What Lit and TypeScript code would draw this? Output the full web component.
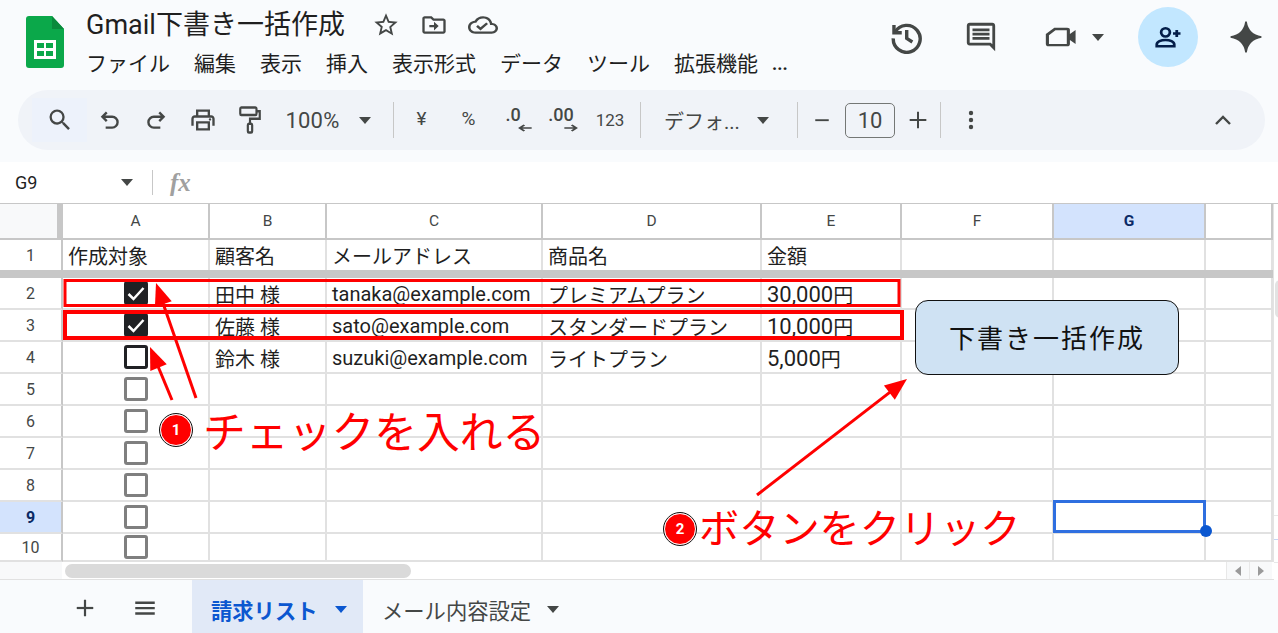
import { LitElement, css, html, svg } from "lit";
import { customElement } from "lit/decorators.js";
import { classMap } from "lit/directives/class-map.js";

const COLS = ["A", "B", "C", "D", "E", "F", "G", ""];
const MENUS = ["ファイル", "編集", "表示", "挿入", "表示形式", "データ", "ツール", "拡張機能"];

const ROWS: string[][] = [
  ["作成対象", "顧客名", "メールアドレス", "商品名", "金額"],
  ["", "田中 様", "tanaka@example.com", "プレミアムプラン", "30,000"],
  ["", "佐藤 様", "sato@example.com", "スタンダードプラン", "10,000"],
  ["", "鈴木 様", "suzuki@example.com", "ライトプラン", "5,000"],
];

const icon = (w: number, h: number, body: unknown, vb = "0 0 24 24") =>
  html`<svg width=${w} height=${h} viewBox=${vb} fill="#444746" preserveAspectRatio="none">${body}</svg>`;

const caret = (color = "#444746") =>
  html`<svg width="12" height="7" viewBox="0 0 12 7"><path d="M0 0h12L6 7z" fill=${color}></path></svg>`;

@customElement("app-root")
export class AppRoot extends LitElement {
  static styles = css`
    :host {
      display: block;
      position: relative;
      width: 1278px;
      height: 633px;
      overflow: hidden;
      background: #fff;
      font-family: Roboto, "Noto Sans CJK JP", sans-serif;
      color: #1f1f1f;
    }
    svg {
      display: block;
      flex: none;
    }

    header {
      height: 162px;
      box-sizing: border-box;
      background: #f9fbfd;
      padding: 7px 16px 0 26px;
    }
    .top {
      display: flex;
      height: 83px;
    }
    .logo {
      margin-top: 9px;
      margin-right: 22px;
    }
    .docinfo {
      width: 780px;
    }
    .title-row {
      display: flex;
      align-items: center;
      height: 36px;
    }
    .title {
      font-size: 27px;
      line-height: 36px;
      width: 286px;
      white-space: nowrap;
    }
    .title-icons {
      display: flex;
      align-items: center;
      gap: 20px;
      margin-left: 20px;
    }
    .menu {
      display: flex;
      gap: 24px;
      margin-top: 4px;
      font-size: 21px;
      line-height: 34px;
      white-space: nowrap;
    }
    .more {
      margin-left: -10px;
      font-size: 18px;
      font-weight: 700;
    }
    .actions {
      display: flex;
      align-items: center;
      height: 60px;
      margin-left: auto;
    }
    .gap-history {
      width: 41px;
    }
    .video {
      display: flex;
      align-items: center;
      gap: 15px;
      margin: 0 34px 0 45px;
    }
    .share {
      width: 60px;
      height: 60px;
      border-radius: 50%;
      background: #c2e7ff;
      display: flex;
      align-items: center;
      justify-content: center;
      margin-right: 32px;
    }

    .toolbar {
      display: flex;
      align-items: center;
      height: 60px;
      margin-left: -8px;
      margin-right: -3px;
      padding-left: 14px;
      border-radius: 30px;
      background: #f0f3f8;
      color: #444746;
    }
    .tool {
      display: flex;
      align-items: center;
      justify-content: center;
      flex: none;
      height: 44px;
    }
    .search {
      width: 55px;
      background: #edf2fb;
    }
    .sep {
      flex: none;
      width: 1px;
      height: 36px;
      background: #c7c7c7;
    }
    .zoom-text {
      font-size: 22px;
      letter-spacing: 0.2px;
    }
    .small {
      font-size: 17px;
    }
    .sym {
      font-size: 19px;
      padding-bottom: 4px;
    }
    .dec {
      flex-direction: column;
      font-size: 18px;
      font-weight: 500;
      line-height: 14px;
      gap: 1px;
    }
    .dec svg {
      align-self: flex-end;
      margin-right: 5px;
    }
    .font-name {
      font-size: 20px;
      white-space: nowrap;
    }
    .size-box {
      width: 48px;
      height: 33px;
      border: 1px solid #747775;
      border-radius: 5px;
      display: flex;
      align-items: center;
      justify-content: center;
      font-size: 22px;
      color: #444746;
    }
    .collapse {
      margin-left: auto;
      margin-right: 33px;
    }

    .formula {
      display: flex;
      align-items: center;
      height: 41px;
      padding-left: 15px;
      border-bottom: 1px solid #c7c7c7;
      font-size: 18px;
    }
    .name {
      width: 106px;
    }
    .formula .sep {
      height: 25px;
      margin: 0 17px 0 19px;
    }
    .fx {
      font-family: "Liberation Serif", serif;
      font-style: italic;
      font-weight: 700;
      font-size: 25px;
      color: #a0a0a0;
    }

    .sheet {
      display: flex;
      height: 376px;
    }
    .grid {
      display: grid;
      grid-template-columns: 63px 147px 117px 216px 219px 140px 152px 152px 67px;
      grid-template-rows: 36px 30px 8px repeat(7, 32px) 32px 28px;
      width: 1273px;
      height: 358px;
      border-right: 1px solid #e3e3e3;
    }
    .cell {
      position: relative;
      box-sizing: border-box;
      border-right: 2px solid #e1e1e1;
      border-bottom: 2px solid #e1e1e1;
      display: flex;
      align-items: center;
      padding-left: 5px;
      font-size: 20px;
      white-space: nowrap;
      min-width: 0;
    }
    .lift {
      padding-top: 2px;
    }
    .digits {
      font-size: 22px;
    }
    .head {
      justify-content: center;
      padding: 0;
      font-size: 15.5px;
      color: #444746;
      border-color: #c7c7c7;
    }
    .corner {
      background: #f8f9fa;
      border-right: 6px solid #c7c7c7;
    }
    .row-head {
      justify-content: center;
      padding: 0;
      font-size: 16px;
      color: #444746;
      border-right-color: #c7c7c7;
    }
    .active-head {
      background: #d3e3fd;
      color: #0b2a66;
      font-weight: 700;
    }
    .no-line {
      border-bottom: 0;
    }
    .freeze {
      grid-column: 1 / -1;
      background: #c7c7c7;
    }
    .center {
      justify-content: center;
      padding: 0;
    }
    .box {
      width: 24px;
      height: 24px;
      box-sizing: border-box;
      border: 3px solid #7f7f7f;
      border-radius: 3px;
      display: flex;
      align-items: center;
      justify-content: center;
    }
    .box.dark {
      border-color: #202124;
    }
    .box.on {
      background: #202124;
      border-color: #202124;
    }
    .selected::after {
      content: "";
      position: absolute;
      left: -1px;
      top: -2px;
      right: -2px;
      bottom: -1px;
      border: 3px solid #2f6fe0;
    }
    .selected::before {
      content: "";
      position: absolute;
      right: -8px;
      bottom: -5px;
      width: 12px;
      height: 12px;
      border-radius: 50%;
      background: #0b57d0;
      z-index: 1;
    }
    .vscroll {
      flex: 1;
      position: relative;
    }
    .vthumb {
      position: absolute;
      left: 1px;
      top: 76px;
      width: 10px;
      height: 38px;
      border-radius: 5px;
      background: #e3e3e3;
    }
    .varrows {
      position: absolute;
      left: 0;
      top: 311px;
      width: 100%;
      height: 46px;
      border-top: 1px solid #e8e8e8;
      border-bottom: 1px solid #e8e8e8;
    }
    .varrows::after {
      content: "";
      position: absolute;
      left: 0;
      right: 0;
      top: 23px;
      height: 1px;
      background: #c6d6f5;
    }
    .hscroll {
      display: flex;
      align-items: center;
      height: 18px;
      box-sizing: border-box;
      border-bottom: 1px solid #e1e1e1;
    }
    .hcorner {
      flex: none;
      width: 62px;
      height: 100%;
      background: #f8f9fa;
      margin-right: 3px;
    }
    .hthumb {
      flex: none;
      width: 346px;
      height: 14px;
      border-radius: 7px;
      background: #dadada;
    }
    .harrows {
      display: flex;
      margin-left: auto;
      margin-right: 2px;
      height: 100%;
      background: #f8f9fa;
    }
    .harrows span {
      width: 23px;
      box-sizing: border-box;
      border-left: 1px solid #e8e8e8;
      display: flex;
      align-items: center;
      justify-content: center;
    }

    .tabs {
      display: flex;
      align-items: stretch;
      height: 53px;
      background: #f9fbfd;
      padding-left: 74px;
    }
    .tab-tool {
      display: flex;
      align-items: center;
      height: 56px;
    }
    .tab {
      display: flex;
      align-items: center;
      padding-top: 6px;
      box-sizing: border-box;
      font-size: 21.3px;
      color: #444746;
      white-space: nowrap;
    }
    .tab.active {
      width: 171px;
      padding-left: 19px;
      margin-left: 34px;
      gap: 17px;
      background: #e1e9f7;
      color: #0b57d0;
      font-weight: 700;
    }
    .tab.other {
      padding-left: 19px;
      gap: 16px;
    }

    /* annotations drawn over the sheet */
    .marks {
      position: absolute;
      left: 0;
      top: 0;
      pointer-events: none;
    }
    .note {
      position: absolute;
      font-family: "Noto Sans CJK JP", sans-serif;
      color: #f00;
      white-space: nowrap;
      line-height: 1;
    }
    .note-1 {
      left: 203px;
      top: 408px;
      font-size: 42.8px;
    }
    .note-2 {
      left: 699px;
      top: 506px;
      font-size: 40.2px;
    }
    .badge {
      position: absolute;
      width: 30px;
      height: 30px;
      border-radius: 50%;
      background: #f00;
      border: 1px solid #fff;
      outline: 1px solid #111;
      display: flex;
      align-items: center;
      justify-content: center;
      color: #fff;
      font-size: 15px;
      font-weight: 700;
    }
    .badge-1 {
      left: 160px;
      top: 414px;
    }
    .badge-2 {
      left: 664px;
      top: 513px;
    }
    .draft {
      position: absolute;
      left: 915px;
      top: 300px;
      width: 264px;
      height: 75px;
      box-sizing: border-box;
      padding-bottom: 2px;
      border: 1.5px solid #111;
      border-radius: 13px;
      background: #cfe2f3;
      display: flex;
      align-items: center;
      justify-content: center;
      font-family: "Noto Sans CJK JP", sans-serif;
      font-size: 26px;
      letter-spacing: 2px;
      color: #111;
    }
  `;

  private renderHeader() {
    return html`
      <header>
        <div class="top">
          <div class="logo">
            <svg width="38" height="52" viewBox="0 0 38 52">
              <path d="M3 0h23l12 13v36a3 3 0 0 1-3 3H3a3 3 0 0 1-3-3V3a3 3 0 0 1 3-3z" fill="#0ba84a"></path>
              <path d="M26 0l12 13H26z" fill="#0a8a3c"></path>
              <path d="M8 24h22v19H8zM11 27v5h7v-5zM20 27v5h7v-5zM11 35v5h7v-5zM20 35v5h7v-5z" fill="#fff" fill-rule="evenodd"></path>
            </svg>
          </div>
          <div class="docinfo">
            <div class="title-row">
              <span class="title">Gmail下書き一括作成</span>
              ${icon(28, 28, svg`<path d="M22 9.24l-7.19-.62L12 2 9.19 8.63 2 9.24l5.46 4.73L5.82 21 12 17.27 18.18 21l-1.63-7.03L22 9.24zM12 15.4l-3.76 2.27 1-4.28-3.32-2.88 4.38-.38L12 6.1l1.71 4.04 4.38.38-3.32 2.88 1 4.28L12 15.4z"></path>`)}
              <div class="title-icons">
                ${icon(28, 26, svg`<path d="M20 6h-8l-2-2H4c-1.1 0-2 .9-2 2v12c0 1.1.9 2 2 2h16c1.1 0 2-.9 2-2V8c0-1.1-.9-2-2-2zm0 12H4V6h5.17l2 2H20v10zm-8-1l4-4-4-4v3H8v2h4v3z"></path>`)}
                ${icon(30, 26, svg`<path d="M19.35 10.04C18.67 6.59 15.64 4 12 4 9.11 4 6.6 5.64 5.35 8.04 2.34 8.36 0 10.91 0 14c0 3.31 2.69 6 6 6h13c2.76 0 5-2.24 5-5 0-2.64-2.05-4.78-4.65-4.96zM19 18H6c-2.21 0-4-1.79-4-4 0-2.05 1.53-3.76 3.56-3.97l1.07-.11.5-.95C8.08 7.14 9.94 6 12 6c2.62 0 4.88 1.86 5.39 4.43l.3 1.5 1.53.11c1.56.1 2.78 1.41 2.78 2.96 0 1.65-1.35 3-3 3zm-9-3.82l-2.09-2.09L6.5 13.5 10 17l6.01-6.01-1.41-1.41z"></path>`)}
              </div>
            </div>
            <div class="menu">
              ${MENUS.map((m) => html`<span>${m}</span>`)}
              <span class="more">...</span>
            </div>
          </div>
          <div class="actions">
            ${icon(34, 34, svg`<g fill="none" stroke="#444746" stroke-width="2.4"><path d="M4.3 8.5A9.5 9.5 0 1 1 3 13"></path><path d="M3.5 3.5V9H9"></path><path d="M12.5 7v6l4 2.5"></path></g>`)}
            <div class="gap-history"></div>
            ${icon(34, 34, svg`<path d="M21.99 4c0-1.1-.89-2-1.99-2H4c-1.1 0-2 .9-2 2v12c0 1.1.9 2 2 2h14l4 4-.01-18zM20 4v13.17L18.83 16H4V4h16zM6 12h12v2H6zm0-3h12v2H6zm0-3h12v2H6z"></path>`)}
            <div class="video">
              ${icon(34, 28, svg`<path d="M8 4h9a2 2 0 0 1 2 2v3.5L23 6v12l-4-3.5V18a2 2 0 0 1-2 2H4a2 2 0 0 1-2-2V9.5zM8.8 6.2L4.2 10.4V18h12.6V6.2z" fill-rule="evenodd"></path>`)}
              ${caret()}
            </div>
            <div class="share">
              ${icon(30, 28, svg`<g fill="none" stroke="#041e49" stroke-width="2.2"><circle cx="10" cy="8" r="3.5"></circle><path d="M3 20v-1.5c0-2.500 3.5-4 7-4s7 1.500 7 4V20z"></path><path d="M19 6v6M16 9h6"></path></g>`)}
            </div>
            ${icon(32, 32, svg`<path d="M12 .5C13 7 17 11 23.5 12 17 13 13 17 12 23.5 11 17 7 13 .5 12 7 11 11 7 12 .5z" stroke="#444746" stroke-width="1.2"></path>`)}
          </div>
        </div>
        <div class="toolbar">
          <div class="tool search">
            ${icon(28, 28, svg`<path d="M15.5 14h-.79l-.28-.27A6.471 6.471 0 0 0 16 9.5 6.5 6.5 0 1 0 9.5 16c1.61 0 3.09-.59 4.23-1.57l.27.28v.79l5 4.99L20.49 19l-4.99-5zm-6 0C7.01 14 5 11.99 5 9.5S7.01 5 9.5 5 14 7.01 14 9.5 11.99 14 9.5 14z"></path>`)}
          </div>
          <div class="tool" style="width:45px">
            ${icon(26, 26, svg`<path d="M9 5L5 9l4 4M5 9h9a5 5 0 0 1 0 10H8" fill="none" stroke="#444746" stroke-width="2.2"></path>`)}
          </div>
          <div class="tool" style="width:47px">
            ${icon(26, 26, svg`<path d="M15 5l4 4-4 4M19 9h-9a5 5 0 0 0 0 10h6" fill="none" stroke="#444746" stroke-width="2.2"></path>`)}
          </div>
          <div class="tool" style="width:48px">
            ${icon(28, 28, svg`<path d="M19 8h-1V3H6v5H5c-1.66 0-3 1.34-3 3v6h4v4h12v-4h4v-6c0-1.66-1.34-3-3-3zM8 5h8v3H8V5zm8 14H8v-4h8v4zm2-2v-4H6v4H4v-6c0-.55.45-1 1-1h14c.55 0 1 .45 1 1v6h-2z"></path><circle cx="18" cy="11.5" r="1"></circle>`)}
          </div>
          <div class="tool" style="width:46px">
            ${icon(26, 30, svg`<g fill="none" stroke="#444746" stroke-width="2"><rect x="3" y="2" width="15" height="6" rx="1"></rect><path d="M18 5h3v6h-9v4"></path><rect x="10" y="15" width="4" height="7" rx="1"></rect></g>`)}
          </div>
          <div class="tool zoom-text" style="width:79px">100%</div>
          <div class="tool" style="width:26px">${caret()}</div>
          <div style="width:15px"></div>
          <div class="sep"></div>
          <div class="tool sym" style="width:55px">¥</div>
          <div class="tool sym" style="width:39px">%</div>
          <div class="tool dec" style="width:50px">
            <span>.0</span>
            ${icon(16, 10, svg`<path d="M22 12H5M11 5l-7 7 7 7" fill="none" stroke="#444746" stroke-width="3.4"></path>`)}
          </div>
          <div class="tool dec" style="width:46px">
            <span>.00</span>
            ${icon(16, 10, svg`<path d="M2 12h17M13 5l7 7-7 7" fill="none" stroke="#444746" stroke-width="3.4"></path>`)}
          </div>
          <div class="tool small" style="width:52px">123</div>
          <div style="width:4px"></div>
          <div class="sep"></div>
          <div class="tool font-name" style="width:122px">デフォ...</div>
          <div class="tool" style="width:0">${caret()}</div>
          <div style="width:34px"></div>
          <div class="sep"></div>
          <div class="tool" style="width:47px">${icon(18, 18, svg`<path d="M3 11h18v2.5H3z"></path>`)}</div>
          <div class="size-box">10</div>
          <div class="tool" style="width:45px">${icon(20, 20, svg`<path d="M2 10.8h20v2.4H2z"></path><path d="M10.8 2h2.4v20h-2.4z"></path>`)}</div>
          <div class="sep"></div>
          <div class="tool" style="width:59px">${icon(6, 20, svg`<circle cx="3" cy="3" r="2.2"></circle><circle cx="3" cy="10" r="2.2"></circle><circle cx="3" cy="17" r="2.2"></circle>`, "0 0 6 20")}</div>
          <div class="tool collapse">${icon(18, 12, svg`<path d="M2 10l7-7 7 7" fill="none" stroke="#444746" stroke-width="2.4"></path>`, "0 0 18 12")}</div>
        </div>
      </header>
    `;
  }

  private renderFormula() {
    return html`
      <div class="formula">
        <span class="name">G9</span>
        ${caret()}
        <div class="sep"></div>
        <span class="fx">fx</span>
      </div>
    `;
  }

  private renderCheck(row: number) {
    const checked = row === 2 || row === 3;
    return html`
      <div class=${classMap({ box: true, on: checked, dark: row === 4 })}>
        ${checked
          ? html`<svg width="18" height="15" viewBox="0 0 18 15"><path d="M1.5 8l5 5L16.5 2" fill="none" stroke="#fff" stroke-width="2.5"></path></svg>`
          : ""}
      </div>
    `;
  }

  private renderRow(row: number) {
    const data = ROWS[row - 1] ?? [];
    const first = row === 1;
    return html`
      <div class=${classMap({ cell: true, "row-head": true, "active-head": row === 9, "no-line": first })}>${row}</div>
      ${COLS.map((_, i) => {
        const isCheck = i === 0 && row > 1;
        const isAmount = i === 4 && !first && data[i];
        return html`
          <div
            class=${classMap({
              cell: true,
              center: isCheck,
              lift: !isCheck && !first,
              "no-line": first,
              selected: row === 9 && i === 6,
            })}
          >
            ${isCheck
              ? this.renderCheck(row)
              : isAmount
                ? html`<span class="digits">${data[i]}</span>円`
                : data[i] ?? ""}
          </div>
        `;
      })}
    `;
  }

  private renderSheet() {
    const rows = [2, 3, 4, 5, 6, 7, 8, 9];
    return html`
      <div class="sheet">
        <div style="flex:none">
          <div class="grid">
            <div class="cell head corner"></div>
            ${COLS.map(
              (c) => html`<div class=${classMap({ cell: true, head: true, "active-head": c === "G" })}>${c}</div>`,
            )}
            ${this.renderRow(1)}
            <div class="freeze"></div>
            ${rows.map((r) => this.renderRow(r))}
            ${this.renderRow(10)}
          </div>
          <div class="hscroll">
            <div class="hcorner"></div>
            <div class="hthumb"></div>
            <div class="harrows">
              <span><svg width="6" height="10" viewBox="0 0 6 10"><path d="M6 0v10L0 5z" fill="#9a9a9a"></path></svg></span>
              <span><svg width="6" height="10" viewBox="0 0 6 10"><path d="M0 0v10l6-5z" fill="#9a9a9a"></path></svg></span>
            </div>
          </div>
        </div>
        <div class="vscroll">
          <div class="vthumb"></div>
          <div class="varrows"></div>
        </div>
      </div>
    `;
  }

  private renderTabs() {
    return html`
      <div class="tabs">
        <div class="tab-tool" style="width:22px">
          ${icon(22, 22, svg`<path d="M3 10.8h18v2.4H3z"></path><path d="M10.8 3h2.4v18h-2.4z"></path>`)}
        </div>
        <div class="tab-tool" style="margin-left:36px">
          ${icon(26, 26, svg`<path d="M3 6h18v2.2H3zM3 11h18v2.2H3zM3 16h18v2.2H3z"></path>`)}
        </div>
        <div class="tab active">
          <span>請求リスト</span>
          ${caret("#0b57d0")}
        </div>
        <div class="tab other">
          <span>メール内容設定</span>
          ${caret()}
        </div>
      </div>
    `;
  }

  private renderMarks() {
    const arrow = (x1: number, y1: number, x2: number, y2: number) => {
      const a = Math.atan2(y2 - y1, x2 - x1);
      const len = 24;
      const spread = 0.38;
      const p = (s: number) => `${x2 - len * Math.cos(a + s)},${y2 - len * Math.sin(a + s)}`;
      return svg`
        <line x1=${x1} y1=${y1} x2=${x2 - 10 * Math.cos(a)} y2=${y2 - 10 * Math.sin(a)} stroke="#f00" stroke-width="3"></line>
        <polygon points="${x2},${y2} ${p(spread)} ${p(-spread)}" fill="#f00"></polygon>
      `;
    };
    return html`
      <svg class="marks" width="1278" height="633" viewBox="0 0 1278 633">
        <rect x="65" y="280.5" width="834" height="25" fill="none" stroke="#f00" stroke-width="3"></rect>
        <rect x="65" y="312" width="837" height="26" fill="none" stroke="#f00" stroke-width="4"></rect>
        ${arrow(196, 398, 156, 283)} ${arrow(172, 400, 150, 347)} ${arrow(757, 495, 907, 379)}
      </svg>
      <div class="draft">下書き一括作成</div>
      <div class="badge badge-1">1</div>
      <div class="note note-1">チェックを入れる</div>
      <div class="badge badge-2">2</div>
      <div class="note note-2">ボタンをクリック</div>
    `;
  }

  render() {
    return html`
      ${this.renderHeader()} ${this.renderFormula()} ${this.renderSheet()} ${this.renderTabs()} ${this.renderMarks()}
    `;
  }
}
